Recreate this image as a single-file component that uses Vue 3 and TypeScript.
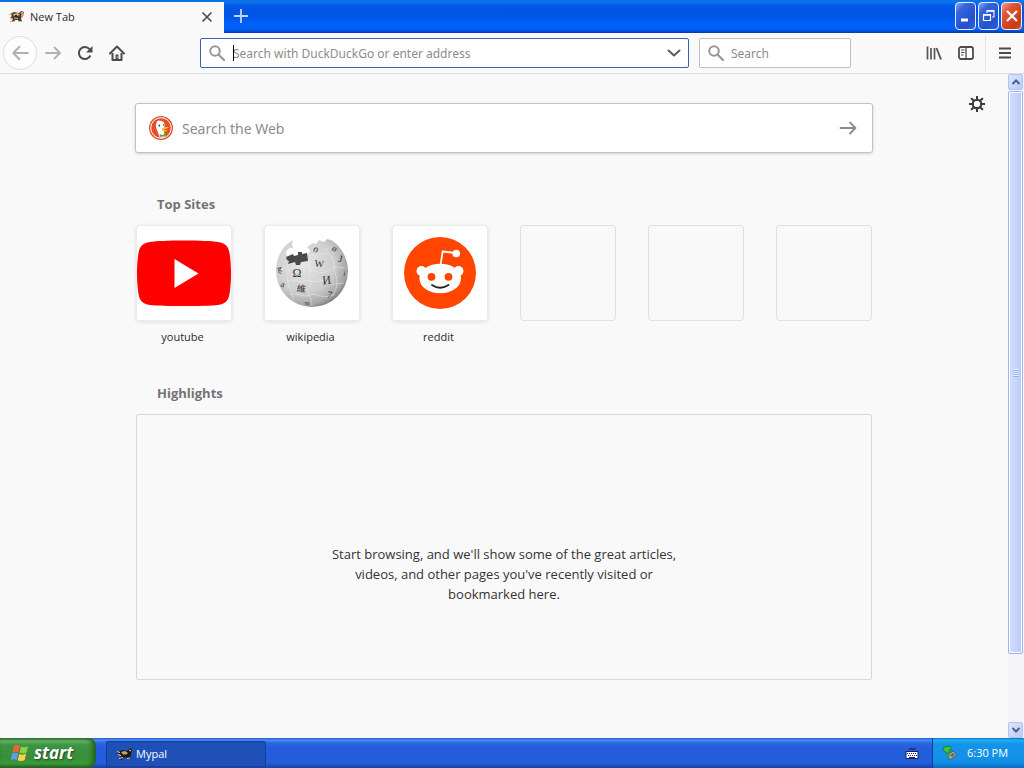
<script setup lang="ts">
import { ref } from 'vue'

interface Site {
  name: string
  icon: 'youtube' | 'wikipedia' | 'reddit'
}

interface Glyph {
  char: string
  x: number
  y: number
  size: number
  turn: number
}

const sites: Site[] = [
  { name: 'youtube', icon: 'youtube' },
  { name: 'wikipedia', icon: 'wikipedia' },
  { name: 'reddit', icon: 'reddit' },
]
const emptySlots = 3

const globeGlyphs: Glyph[] = [
  { char: 'Ω', x: 33, y: 52, size: 12, turn: 0 },
  { char: 'W', x: 55, y: 42, size: 10, turn: 6 },
  { char: 'И', x: 63, y: 59, size: 12, turn: -6 },
  { char: '維', x: 37, y: 67, size: 9, turn: 6 },
  { char: '7', x: 65, y: 73, size: 10, turn: 12 },
  { char: 'ი', x: 51, y: 27, size: 9, turn: 20 },
  { char: 'ø', x: 69, y: 26, size: 9, turn: 35 },
  { char: 'J', x: 76, y: 37, size: 10, turn: 10 },
  { char: 'i', x: 80, y: 51, size: 8, turn: 10 },
  { char: 'ह', x: 16, y: 48, size: 8, turn: -10 },
  { char: 'a', x: 18, y: 62, size: 9, turn: 20 },
  { char: 'm', x: 43, y: 80, size: 6, turn: 5 },
]

const address = ref('')
const quickSearch = ref('')
const webSearch = ref('')
</script>

<template>
  <div class="desktop">
    <header class="titlebar">
      <div class="tab">
        <svg class="tab-icon" viewBox="0 0 16 16" width="16" height="16" aria-hidden="true">
          <path d="M1 5 L5 3 L10 4 L12 2 L15 3 L14 7 L12 9 L13 13 L10 13 L9 11 L6 11 L5 13 L2 13 L4 10 L1 9 L3 7 Z" fill="#4a3f2a" />
          <path d="M4 5 L9 4 L11 6 L8 7 L5 7 Z" fill="#d4ba7c" />
          <path d="M11.500 3 L14.500 3 L14 8 L12.500 9 Z" fill="#dd9077" />
          <path d="M0 6 L3 5 M5 9 L9 9.500 M1 12.500 H5 M10 12.500 H13 M1 9 L4 10" stroke="#cdb47a" />
          <path d="M6 6 h2 v1.500 h-2 z M11 5 h1 v1 h-1 z" fill="#111" />
        </svg>
        <span class="tab-title">New Tab</span>
        <button class="tab-close" aria-label="Close tab">
          <svg viewBox="0 0 16 16" width="16" height="16"><path d="M3.5 3.5 L12.5 12.5 M12.5 3.5 L3.5 12.5" stroke="#4a4a4f" stroke-width="1.6" /></svg>
        </button>
      </div>
      <button class="new-tab" aria-label="New tab">
        <svg viewBox="0 0 16 16" width="16" height="16"><path d="M8 1 V15 M1 8 H15" stroke="#b8d6ff" stroke-width="1.8" /></svg>
      </button>
      <div class="window-buttons">
        <button class="caption" aria-label="Minimize">
          <svg viewBox="0 0 18 26" width="18" height="26"><path d="M4 17 H11" stroke="#fff" stroke-width="3" /></svg>
        </button>
        <button class="caption" aria-label="Restore">
          <svg viewBox="0 0 18 26" width="18" height="26"><path d="M7 10 V7.500 H14 V14 H12" fill="none" stroke="#dfe8ff" stroke-width="1.2" /><path d="M7 8 H14" stroke="#fff" stroke-width="1.600" /><path d="M3.500 11.500 H10.500 V17.500 H3.500 Z" fill="none" stroke="#fff" stroke-width="1.200" /><path d="M3 12 H11" stroke="#fff" stroke-width="1.600" /></svg>
        </button>
        <button class="caption close" aria-label="Close">
          <svg viewBox="0 0 18 26" width="18" height="26"><path d="M4 8 L14 18 M14 8 L4 18" stroke="#fff" stroke-width="2.200" /></svg>
        </button>
      </div>
    </header>

    <nav class="toolbar" aria-label="Navigation">
      <div class="nav-buttons">
        <button class="back" aria-label="Back">
          <svg viewBox="0 0 16 16" width="18" height="18"><path d="M15 8 H2 M7.500 2.500 L2 8 L7.500 13.500" fill="none" stroke="#b1b1b3" stroke-width="1.800" stroke-linecap="round" stroke-linejoin="round" /></svg>
        </button>
        <button class="tool" aria-label="Forward">
          <svg viewBox="0 0 16 16" width="16" height="16"><path d="M1 8 H15 M9.500 2.500 L15 8 L9.500 13.500" fill="none" stroke="#b1b1b3" stroke-width="1.800" stroke-linecap="round" stroke-linejoin="round" /></svg>
        </button>
        <button class="tool" aria-label="Reload">
          <svg viewBox="0 0 16 16" width="16" height="16"><path d="M13.400 10.500 A6 6 0 1 1 12.500 4.200" fill="none" stroke="#4a4a4f" stroke-width="2" /><path d="M15.500 1 V7.500 H9 Z" fill="#4a4a4f" /></svg>
        </button>
        <button class="tool" aria-label="Home">
          <svg viewBox="0 0 16 16" width="16" height="16"><path d="M1 8.500 L8 1.500 L15 8.500" fill="none" stroke="#4a4a4f" stroke-width="2" stroke-linecap="round" stroke-linejoin="round" /><path d="M3.500 8 V15 H12.500 V8" fill="none" stroke="#4a4a4f" stroke-width="2" stroke-linejoin="round" /><path d="M6.500 15 V9.500 H9.500 V15 Z" fill="#4a4a4f" /><path d="M8.200 11.500 v1.200" stroke="#fff" stroke-width="1" /></svg>
        </button>
      </div>

      <label class="field address">
        <svg class="lens" viewBox="0 0 16 16" width="16" height="16" aria-hidden="true"><circle cx="6" cy="6" r="4.800" fill="none" stroke="#98989a" stroke-width="2" /><path d="M9.500 9.500 L15 15" stroke="#98989a" stroke-width="2.200" stroke-linecap="round" /></svg>
        <span class="entry">
          <span class="caret"></span>
          <input v-model="address" type="text" aria-label="Address" placeholder="Search with DuckDuckGo or enter address" />
        </span>
        <button class="drop" aria-label="Show history">
          <svg viewBox="0 0 16 16" width="16" height="16"><path d="M2.500 5.500 L8 10.500 L13.500 5.500" fill="none" stroke="#5a5a5e" stroke-width="2" stroke-linecap="round" stroke-linejoin="round" /></svg>
        </button>
      </label>

      <label class="field quick">
        <svg class="lens" viewBox="0 0 16 16" width="16" height="16" aria-hidden="true"><circle cx="6" cy="6" r="4.800" fill="none" stroke="#98989a" stroke-width="2" /><path d="M9.500 9.500 L15 15" stroke="#98989a" stroke-width="2.200" stroke-linecap="round" /></svg>
        <input v-model="quickSearch" type="text" aria-label="Search" placeholder="Search" />
      </label>

      <div class="tools">
        <button class="tool" aria-label="Library">
          <svg viewBox="0 0 16 16" width="16" height="16"><path d="M1.500 1.500 V14.500 M5 3 V14.500 M8.500 3 V14.500" stroke="#55555a" stroke-width="1.700" /><path d="M10.500 3 L15 14.500" stroke="#55555a" stroke-width="1.900" /></svg>
        </button>
        <button class="tool" aria-label="Sidebars">
          <svg viewBox="0 0 16 16" width="16" height="16"><rect x="1" y="2" width="14" height="12" rx="2" fill="#fff" stroke="#4a4a4f" stroke-width="1.800" /><path d="M8 2 V14" stroke="#4a4a4f" stroke-width="1.300" /><path d="M3 5 H6.500 M3 7.500 H6.500 M3 10 H5.500" stroke="#4a4a4f" /></svg>
        </button>
        <button class="tool menu" aria-label="Open menu">
          <svg viewBox="0 0 16 16" width="16" height="16"><path d="M2 3.500 H14 M2 8 H14 M2 12.500 H14" stroke="#4a4a4f" stroke-width="1.800" /></svg>
        </button>
      </div>
    </nav>

    <div class="viewport">
      <main class="page">
        <button class="prefs" aria-label="Customize page">
          <svg viewBox="0 0 16 16" width="16" height="16"><circle cx="8" cy="8" r="4.300" fill="none" stroke="#3a3a3e" stroke-width="2" /><path d="M8 0.500 V4 M8 12 V15.500 M0.500 8 H4 M12 8 H15.500 M2.700 2.700 L5 5 M11 11 L13.300 13.300 M2.700 13.300 L5 11 M11 5 L13.300 2.700" stroke="#3a3a3e" stroke-width="2" stroke-linecap="round" /></svg>
        </button>
        <div class="column">
          <label class="web-search">
            <svg viewBox="0 0 24 24" width="24" height="24" aria-hidden="true">
              <circle cx="12" cy="12" r="12" fill="#d9502c" />
              <circle cx="12" cy="12" r="10.300" fill="#e24f28" stroke="#fff" stroke-width="1" />
              <path d="M7.500 7 C7.500 4.500 10.500 4 12 5 C15 5 16 8 15.500 10.500 L14.500 14 L16 21 C13 22 11 21.800 10.500 21 L8 14 C6.500 11 6.800 9 7.500 7 Z" fill="#fff" />
              <path d="M13 12 C15 11 18 10.800 20 11.500 C18 12.500 16.500 13.200 14.500 13.500 L18.500 14.500 C17 16 14 15.500 13 14.500 Z" fill="#f8be2d" />
              <circle cx="10.300" cy="9.500" r="0.900" fill="#27415c" />
              <circle cx="14.500" cy="9" r="0.700" fill="#27415c" />
              <path d="M10.500 18 L13 19 L17 17.500 V20.500 L13.500 20.500 L11 21 Z" fill="#61a63e" />
            </svg>
            <input v-model="webSearch" type="text" aria-label="Search the Web" placeholder="Search the Web" />
            <button aria-label="Submit search">
              <svg viewBox="0 0 18 18" width="18" height="18"><path d="M1.500 9 H16.500 M11 3.500 L16.500 9 L11 14.500" fill="none" stroke="#8a8a8c" stroke-width="1.800" stroke-linecap="round" stroke-linejoin="round" /></svg>
            </button>
          </label>

          <section class="top-sites">
            <h2>Top Sites</h2>
            <ul>
              <li v-for="site in sites" :key="site.name">
                <a href="#">
                  <span class="tile">
                    <svg v-if="site.icon === 'youtube'" viewBox="0 0 96 96" aria-hidden="true">
                      <path d="M48 15.500 C64 15.500 76 16 82 17 C89.500 18.200 92.500 21.500 93.500 28 C95.500 40 95.500 57 93.500 69 C92.500 75.500 89.500 79 82 80 C70 81.400 26 81.400 14 80 C6.500 79 3.500 75.500 2.500 69 C0.500 57 0.500 40 2.500 28 C3.500 21.500 6.500 18.200 14 17 C20 16 32 15.500 48 15.500 Z" fill="#fe0000" />
                      <path d="M38.500 34 L62.500 48.500 L38.500 63 Z" fill="#fff" />
                    </svg>
                    <svg v-else-if="site.icon === 'wikipedia'" viewBox="0 0 96 96" aria-hidden="true">
                      <defs>
                        <radialGradient id="globe" cx="0.38" cy="0.36" r="0.72">
                          <stop offset="0" stop-color="#e6e6e6" />
                          <stop offset="0.6" stop-color="#cdcdcd" />
                          <stop offset="0.85" stop-color="#a5a5a5" />
                          <stop offset="1" stop-color="#626262" />
                        </radialGradient>
                      </defs>
                      <path d="M29 15 L26 17 C17 23 12 34 12 46 A36 36 0 0 0 84 46 C84 33 77 21 67 15 L63 14 L60 17 L55 15 L52 19 L49 18 L43 22 L46 26 L43 30 L36 32 L23 32 L22 27 L25 23 L29 23 L28 19 Z" fill="url(#globe)" />
                      <path d="M22 32 L29 29 L30 31 L34 30 L34 27 L38 27 L38 29 L43 28 L44 36 L37 37 L36 40 L32 40 L31 37 L24 39 L25 36 L23 35 Z" fill="#4a4a4a" />
                      <path d="M24 40 C25 46 23 52 24 58 S29 67 29 76 M45 37 C44 43 48 45 46 50 S49 57 45 62 48 72 48 81 M62 23 C64 30 70 32 70 40 S75 55 72 63 L69 71 M13 45 L20 43 23 45 M24 57 C31 54 35 58 41 56 S50 59 56 56 65 61 71 59 L80 58 M47 45 C53 46 55 49 61 47 S67 42 71 42 L80 43 M26 70 C34 67 40 73 46 70 S58 75 69 70 M45 30 L52 31 54 28 63 29" fill="none" stroke="#ececec" stroke-width="0.5" />
                      <text v-for="g in globeGlyphs" :key="g.char" :x="g.x" :y="g.y" :font-size="g.size" :transform="`rotate(${g.turn} ${g.x} ${g.y})`" text-anchor="middle" class="glyph">{{ g.char }}</text>
                    </svg>
                    <svg v-else viewBox="0 0 96 96" aria-hidden="true">
                      <circle cx="48" cy="48" r="36" fill="#ff4500" />
                      <path d="M48.500 40 L50.700 26.500 L64 28" fill="none" stroke="#fff" stroke-width="1.800" stroke-linejoin="round" />
                      <circle cx="64.300" cy="28.500" r="3.800" fill="#fff" />
                      <circle cx="29.500" cy="46" r="5" fill="#fff" />
                      <circle cx="66.500" cy="46" r="5" fill="#fff" />
                      <ellipse cx="48.200" cy="53.500" rx="20.800" ry="14.800" fill="#fff" />
                      <circle cx="39.500" cy="51.800" r="3.900" fill="#ff4500" />
                      <circle cx="56.500" cy="51.800" r="3.900" fill="#ff4500" />
                      <path d="M40 60 Q48 65.500 56.500 60" fill="none" stroke="#222" stroke-width="1.800" stroke-linecap="round" />
                    </svg>
                  </span>
                  <span class="site-name">{{ site.name }}</span>
                </a>
              </li>
              <li v-for="n in emptySlots" :key="n"><span class="tile empty"></span></li>
            </ul>
          </section>

          <section class="highlights">
            <h2>Highlights</h2>
            <div class="empty-state">
              <p>Start browsing, and we'll show some of the great articles, videos, and other pages you've recently visited or bookmarked here.</p>
            </div>
          </section>
        </div>
      </main>

      <div class="scrollbar">
        <button class="scroll-btn" aria-label="Scroll up">
          <svg viewBox="0 0 10 10" width="10" height="10"><path d="M1.500 7 L5 3.500 L8.500 7" fill="none" stroke="#4d6185" stroke-width="2" /></svg>
        </button>
        <div class="track"><div class="thumb"><i></i></div></div>
        <button class="scroll-btn" aria-label="Scroll down">
          <svg viewBox="0 0 10 10" width="10" height="10"><path d="M1.500 3 L5 6.500 L8.500 3" fill="none" stroke="#4d6185" stroke-width="2" /></svg>
        </button>
      </div>
    </div>

    <footer class="taskbar">
      <button class="start">
        <svg viewBox="0 0 20 20" width="20" height="20" aria-hidden="true">
          <path d="M4 3 C6 1.500 8 1.800 10 3 L8.500 9.500 C6.500 8.500 4.500 8.500 2.500 9.500 Z" fill="#f0622f" />
          <path d="M11 3.500 C13 4.500 15.500 4.500 18 3 L16.500 9.500 C14 11 11.500 10.500 9.500 9.800 Z" fill="#8bd14a" />
          <path d="M2.200 10.500 C4.200 9.500 6.200 9.500 8.200 10.500 L6.700 17 C4.700 16 2.700 16 0.700 17 Z" fill="#5b9bf2" />
          <path d="M9.200 11 C11.200 12 13.700 12 16.200 10.500 L14.700 17 C12.200 18.500 9.700 18.200 7.700 17.200 Z" fill="#ffd23f" />
        </svg>
        <span>start</span>
      </button>
      <button class="task">
        <svg viewBox="0 0 16 16" width="16" height="16" aria-hidden="true">
          <path d="M0 5 L3 5 L6 4 L10 5 L13 2 L15 4 L14 9 L13 13 L10 13 L9 11 L6 12 L5 14 L2 13 L4 10 L1 8 Z" fill="#1d1a18" />
          <path d="M4 6 L8 5 L11 7 L9 8.500 L6 8.500 Z" fill="#c3a570" />
          <path d="M0 5.500 L3 6.500 M12 4 L14 5 M2 12.500 L6 11.500 M10 12.500 L13 12 M1 8.500 L4 9.500" stroke="#f4dfae" />
        </svg>
        <span>Mypal</span>
      </button>
      <div class="tray-gap">
        <svg viewBox="0 0 14 14" width="14" height="14" aria-label="Keyboard" role="img">
          <path d="M4 4 Q5 1.500 7 3 T11 1.500" fill="none" stroke="#141a40" />
          <path d="M1 5.500 H13 V12.500 H1 Z" fill="#fff" stroke="#1a2350" />
          <path d="M2 7.500 H12 M3 9.500 H12" stroke="#1a2350" stroke-dasharray="1 1" />
          <path d="M4 11.500 H10" stroke="#1a2350" />
        </svg>
      </div>
      <div class="tray">
        <svg viewBox="0 0 16 16" width="16" height="16" aria-label="Safely remove hardware" role="img">
          <path d="M2 2 L8 1 L10 4 L7 5 L8 8 L5 8 L1 5 Z" fill="#3fc63c" stroke="#167a26" stroke-width="0.800" />
          <path d="M5 10 L11 6 L15 10 L8 15 Z" fill="#9fa7ad" stroke="#4d565e" stroke-width="0.900" />
          <path d="M8 10 L11 8 L13 10 L10 12 Z" fill="#5f6a72" />
          <path d="M5 8 L8 10 L6 13 L4 10 Z" fill="#2f9e35" />
        </svg>
        <time>6:30 PM</time>
      </div>
    </footer>
  </div>
</template>

<style>
html,
body {
  margin: 0;
  height: 100%;
  overflow: hidden;
}
</style>

<style scoped>
.desktop {
  display: flex;
  flex-direction: column;
  height: 100vh;
  background: #f9f9f9;
  color: #2a2a2e;
  font: 12px/20px "Noto Sans", "Open Sans", sans-serif;
}
* {
  box-sizing: border-box;
}
button {
  display: flex;
  align-items: center;
  justify-content: center;
  flex: none;
  padding: 0;
  border: 0;
  background: none;
  color: inherit;
  font: inherit;
}
svg {
  display: block;
  flex: none;
}
input {
  flex: 1;
  width: 100%;
  min-width: 0;
  padding: 2px 0 0;
  border: 0;
  outline: 0;
  background: none;
  color: #2a2a2e;
  font: inherit;
}
input::placeholder {
  color: #8c8c8e;
  opacity: 1;
}

.titlebar {
  display: flex;
  flex: none;
  height: 33px;
  padding-top: 2px;
  background: linear-gradient(#0a73ec 0, #0a73ec 2px, #0358e8 6px, #0054e3 14px, #0061fb 26px, #0060f8 29px, #003cae 33px);
}
.tab {
  display: flex;
  align-items: center;
  width: 224px;
  padding: 0 9px 1px;
  background: #f9f9f9;
  font: 11px/20px "Open Sans", "Noto Sans", sans-serif;
}
.tab-title {
  flex: 1;
  padding-left: 5px;
}
.new-tab {
  width: 33px;
  padding-bottom: 3px;
}
.window-buttons {
  display: flex;
  gap: 2px;
  margin-left: auto;
  padding-right: 2px;
}
.caption {
  width: 21px;
  height: 28px;
  border: 1px solid #e6eeff;
  border-radius: 4px;
  background: linear-gradient(135deg, #8ba8f3 0, #3565dd 25%, #2350cd 70%, #2a63e6 100%);
}
.caption.close {
  background: linear-gradient(135deg, #f0a18c 0, #df5434 30%, #c93b16 80%, #d85c34 100%);
}

.toolbar {
  display: flex;
  align-items: center;
  flex: none;
  height: 41px;
  border-bottom: 1px solid #dcdcdd;
  background: #f9f9f9;
}
.nav-buttons {
  display: flex;
  align-items: center;
  width: 200px;
  padding-left: 3px;
}
.back {
  width: 34px;
  height: 34px;
  border: 1px solid #dcdcde;
  border-radius: 50%;
  background: #fdfdfd;
}
.tool {
  width: 32px;
  height: 32px;
}
.field {
  display: flex;
  align-items: center;
  height: 30px;
  border: 1px solid #bfbfc2;
  border-radius: 2px;
  background: #fff;
}
.lens {
  margin: 0 8px;
}
.address {
  flex: 1;
  border-color: #3565b0;
}
.entry {
  position: relative;
  display: flex;
  flex: 1;
}
.caret {
  position: absolute;
  top: 3px;
  left: 0;
  width: 1px;
  height: 16px;
  background: #000;
}
.drop {
  width: 28px;
  height: 28px;
}
.quick {
  width: 152px;
  margin-left: 10px;
}
.quick .lens {
  margin-right: 7px;
}
.tools {
  display: flex;
  align-items: center;
  margin-left: 67px;
}
.menu {
  width: 39px;
  height: 36px;
  margin-left: 3px;
  padding-right: 1px;
  border-left: 1px solid #e4e4e5;
}

.viewport {
  display: flex;
  flex: 1;
  min-height: 0;
}
.page {
  position: relative;
  flex: 1;
  overflow: hidden;
}
.prefs {
  position: absolute;
  top: 22px;
  right: 23px;
  width: 16px;
  height: 16px;
}
.column {
  width: 738px;
  max-width: 100%;
  margin: 0 auto;
  padding-top: 29px;
}
.web-search {
  display: flex;
  align-items: center;
  height: 50px;
  padding: 0 15px 0 13px;
  border: 1px solid #c3c3c4;
  border-radius: 3px;
  background: #fff;
  box-shadow: 0 1px 3px rgba(0, 0, 0, 0.16);
  font-size: 14px;
}
.web-search input {
  margin-left: 9px;
}
section {
  padding: 0 1px;
}
h2 {
  margin: 0;
  padding-left: 21px;
  color: #737375;
  font: bold 13px/20px "Open Sans", "Noto Sans", sans-serif;
}
.top-sites {
  margin-top: 41px;
}
ul {
  display: flex;
  justify-content: space-between;
  margin: 11px 0 0;
  padding: 0;
  list-style: none;
}
li {
  width: 96px;
}
a {
  color: #2a2a2e;
  text-decoration: none;
}
.tile {
  display: block;
  height: 96px;
  border-radius: 4px;
  background: #fff;
  box-shadow: 0 0 0 1px #ececed inset, 0 1px 4px rgba(0, 0, 0, 0.12);
}
.tile.empty {
  background: none;
  box-shadow: 0 0 0 1px #e1e1e2 inset;
}
.glyph {
  fill: #333;
  font-family: "Liberation Serif", "DejaVu Serif", "Noto Sans CJK TC", serif;
}
.site-name {
  display: block;
  padding: 6px 3px 0 0;
  font: 11px/20px "Open Sans", "Noto Sans", sans-serif;
  text-align: center;
}
.highlights {
  margin-top: 36px;
}
.empty-state {
  display: flex;
  align-items: center;
  justify-content: center;
  height: 266px;
  margin-top: 11px;
  padding-top: 53px;
  border: 1px solid #d9d9da;
  border-radius: 2px;
}
.empty-state p {
  width: 350px;
  margin: 0;
  color: #333336;
  font: 13px/20px "Open Sans", "Noto Sans", sans-serif;
  text-align: center;
}

.scrollbar {
  display: flex;
  flex-direction: column;
  width: 16px;
  background: #f5f5f9;
}
.scroll-btn {
  width: 15px;
  height: 16px;
  border: 1px solid #b2c2f2;
  border-radius: 2px;
  background: linear-gradient(135deg, #dde6ff, #b9cbf8);
}
.track {
  flex: 1;
  padding-top: 1px;
}
.thumb {
  display: flex;
  align-items: center;
  justify-content: center;
  width: 15px;
  height: 89.3%;
  border: 1px solid #9fb5ec;
  border-radius: 2px;
  background: linear-gradient(90deg, #d3deff, #c4d2fd 60%, #b6c8f7);
  box-shadow: 0 0 0 1px #fff inset;
}
.thumb i {
  width: 6px;
  height: 8px;
  background: repeating-linear-gradient(#eef4ff 0, #eef4ff 1px, #8cb0f8 1px, #8cb0f8 2px);
}

.taskbar {
  display: flex;
  flex: none;
  height: 30px;
  background: linear-gradient(#2458c8 0, #4a8cf5 2px, #2b66e2 5px, #245cdc 10px, #245edb 25px, #1941a5 30px);
  color: #fff;
  font: 11px/20px "Open Sans", "Noto Sans", sans-serif;
}
.start {
  justify-content: flex-start;
  width: 96px;
  padding-left: 10px;
  border-radius: 0 8px 8px 0;
  background: linear-gradient(#2f7a30 0, #6db86b 3px, #3d9440 7px, #388e39 20px, #3b9a3c 26px, #256526 30px);
  box-shadow: -3px 0 5px #1f5a20 inset;
  font: italic bold 17px/24px "Open Sans", "Noto Sans", sans-serif;
  text-shadow: 1px 1px 2px #1d4a1e;
}
.start span {
  padding-left: 4px;
}
.task {
  justify-content: flex-start;
  gap: 3px;
  width: 160px;
  height: 26px;
  margin: 3px 0 0 10px;
  padding-left: 10px;
  border: 1px solid #173f99;
  border-radius: 2px;
  background: #1e50b8;
}
.tray-gap {
  display: flex;
  align-items: center;
  margin-left: auto;
  padding-right: 13px;
}
.tray {
  display: flex;
  align-items: center;
  gap: 9px;
  width: 92px;
  padding-left: 9px;
  border-left: 1px solid #0c3f9c;
  background: linear-gradient(#0f6fc8 0, #1fb0f4 2px, #1494e8 6px, #1290e8 24px, #0d6bc2 30px);
}
</style>
